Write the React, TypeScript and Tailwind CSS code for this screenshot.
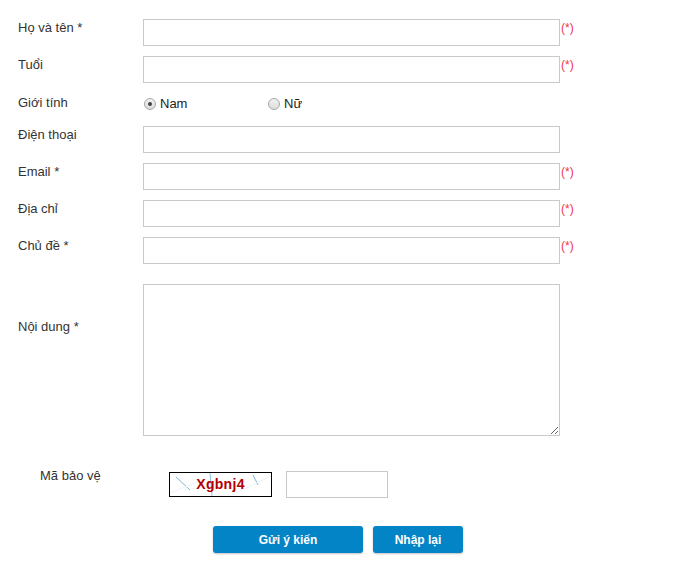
const inputCls = "h-[27px] w-[417px] border border-[#c9c9c9] bg-white px-1 text-[13px] outline-none";

function Row({ label, required, star }: { label: string; required?: boolean; star?: boolean }) {
    return (
        <div className="flex items-start">
            <label className="w-[125px] pt-[1px] leading-[16px]">
                {label}
                {star ? " *" : ""}
            </label>
            <input type="text" className={inputCls} />
            {required && <span className="ml-[1px] pt-[2px] text-[12px] leading-[15px] text-[#f0334d]">(*)</span>}
        </div>
    );
}

function Radio({ checked }: { checked?: boolean }) {
    return (
        <span className="flex h-[12px] w-[12px] items-center justify-center rounded-full border border-[#a6a6a6] bg-gradient-to-b from-[#f2f2f2] to-[#dcdcdc]">
            {checked && <span className="h-[4px] w-[4px] rounded-full bg-[#444]" />}
        </span>
    );
}

function Captcha() {
    return (
        <div className="relative flex h-[25px] w-[103px] items-center justify-center border border-black bg-white">
            <svg className="absolute inset-0" width="101" height="23" viewBox="0 0 101 23">
                <line x1="6" y1="4" x2="20" y2="17" stroke="#7ab8d6" strokeWidth="1" />
                <line x1="40" y1="0" x2="42" y2="23" stroke="#8cc4de" strokeWidth="1" />
                <line x1="83" y1="2" x2="88" y2="12" stroke="#7ab8d6" strokeWidth="1" />
                <line x1="60" y1="23" x2="101" y2="3" stroke="#eef2f4" strokeWidth="1" />
                <line x1="0" y1="20" x2="30" y2="8" stroke="#f0f3f5" strokeWidth="1" />
            </svg>
            <span className="relative font-bold text-[14px] tracking-[0.3px] text-[#b30000]">Xgbnj4</span>
        </div>
    );
}

export default function App() {
    return (
        <div className="min-h-[562px] bg-white pl-[18px] pt-[19px] font-['Liberation_Sans',Arial,sans-serif] text-[13px] text-[#333]">
            <div className="flex flex-col gap-y-[10px]">
                <Row label="Họ và tên" star required />
                <Row label="Tuổi" required />

                <div className="flex h-[23px] items-start">
                    <label className="w-[125px] pt-[2px] leading-[16px]">Giới tính</label>
                    <div className="flex items-center pt-[1px]">
                        <div className="flex w-[125px] items-center gap-x-[4px] pl-[1px]">
                            <Radio checked />
                            <span className="text-[#222]">Nam</span>
                        </div>
                        <div className="flex items-center gap-x-[4px]">
                            <Radio />
                            <span className="text-[#222]">Nữ</span>
                        </div>
                    </div>
                </div>

                <Row label="Điện thoại" />
                <Row label="Email" star required />
                <Row label="Địa chỉ" required />
                <Row label="Chủ đề" star required />

                <div className="mt-[10px] flex items-start">
                    <label className="w-[125px] pt-[35px] leading-[16px]">Nội dung *</label>
                    <textarea className="h-[152px] w-[417px] resize border border-[#c9c9c9] bg-white p-1 text-[13px] outline-none" />
                </div>
            </div>

            <div className="mt-[35px] flex items-start">
                <label className="-mt-[3px] w-[151px] pl-[22px] leading-[16px]">Mã bảo vệ</label>
                <div className="mt-[1px]">
                    <Captcha />
                </div>
                <input type="text" className="ml-[14px] h-[27px] w-[102px] border border-[#c9c9c9] bg-white px-1 outline-none" />
            </div>

            <div className="mt-[28px] flex gap-x-[10px] pl-[195px]">
                <button className="h-[27px] w-[150px] rounded-[3px] bg-[#0284c7] text-[12px] font-bold text-white shadow-[0_1px_2px_rgba(0,0,0,0.25)]">
                    Gửi ý kiến
                </button>
                <button className="h-[27px] w-[90px] rounded-[3px] bg-[#0284c7] text-[12px] font-bold text-white shadow-[0_1px_2px_rgba(0,0,0,0.25)]">
                    Nhập lại
                </button>
            </div>
        </div>
    );
}
